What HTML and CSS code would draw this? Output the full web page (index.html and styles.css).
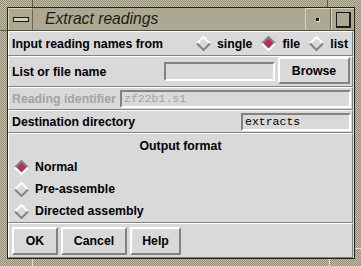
FILE: index.html
```html
<html lang="en">
<head>
  <meta charset="UTF-8">
  <title>Extract readings</title>
  <link rel="stylesheet" href="styles.css">
</head>
<body>

<div class="frame">
  <span class="handle h-top-left"></span>
  <span class="handle h-left-top"></span>
  <span class="handle h-top-right"></span>
  <span class="handle h-bottom-left"></span>
  <span class="handle h-bottom-right"></span>
  <span class="handle h-right-bottom"></span>

  <div class="window">
    <div class="titlebar">
      <div class="tb-btn tb-menu"><span class="bar"></span></div>
      <div class="title">Extract readings</div>
      <div class="tb-btn tb-iconify"><span class="dot"></span></div>
      <div class="tb-btn tb-maximize"><span class="box"></span></div>
    </div>

    <div class="client">
      <div class="row row-source">
        <span class="label">Input reading names from</span>
        <div class="radios">
          <span class="radio">
            <svg width="15" height="15" viewBox="0 0 15 15"><polyline points="1,7.5 7.5,1 14,7.5" class="hi"/><polyline points="1,7.5 7.5,14 14,7.5" class="lo"/></svg>
            single
          </span>
          <span class="radio on">
            <svg width="15" height="15" viewBox="0 0 15 15"><polygon points="7.5,2 13,7.5 7.5,13 2,7.5" class="dot"/><polyline points="1,7.5 7.5,1 14,7.5" class="lo"/><polyline points="1,7.5 7.5,14 14,7.5" class="hi"/></svg>
            file
          </span>
          <span class="radio">
            <svg width="15" height="15" viewBox="0 0 15 15"><polyline points="1,7.5 7.5,1 14,7.5" class="hi"/><polyline points="1,7.5 7.5,14 14,7.5" class="lo"/></svg>
            list
          </span>
        </div>
      </div>

      <div class="row row-file">
        <span class="label">List or file name</span>
        <span class="entry entry-file"></span>
        <span class="button browse">Browse</span>
      </div>

      <div class="row row-ident disabled">
        <span class="label">Reading identifier</span>
        <span class="entry entry-ident">zf22b1.s1</span>
      </div>

      <div class="row row-dest">
        <span class="label">Destination directory</span>
        <span class="entry entry-dest">extracts</span>
      </div>

      <div class="group">
        <div class="group-title">Output format</div>
        <span class="radio on">
          <svg width="15" height="15" viewBox="0 0 15 15"><polygon points="7.5,2 13,7.5 7.5,13 2,7.5" class="dot"/><polyline points="1,7.5 7.5,1 14,7.5" class="lo"/><polyline points="1,7.5 7.5,14 14,7.5" class="hi"/></svg>
          Normal
        </span>
        <span class="radio">
          <svg width="15" height="15" viewBox="0 0 15 15"><polyline points="1,7.5 7.5,1 14,7.5" class="hi"/><polyline points="1,7.5 7.5,14 14,7.5" class="lo"/></svg>
          Pre-assemble
        </span>
        <span class="radio">
          <svg width="15" height="15" viewBox="0 0 15 15"><polyline points="1,7.5 7.5,1 14,7.5" class="hi"/><polyline points="1,7.5 7.5,14 14,7.5" class="lo"/></svg>
          Directed assembly
        </span>
      </div>

      <div class="row row-buttons">
        <span class="button btn-ok">OK</span>
        <span class="button btn-cancel">Cancel</span>
        <span class="button btn-help">Help</span>
      </div>
    </div>
  </div>
</div>

</body>
</html>
```

FILE: styles.css
```css
body {
  margin: 0;
  font-family: "Liberation Sans", Arial, sans-serif;
  font-size: 12.3px;
  font-weight: bold;
  color: #000;
}

.frame {
  position: relative;
  width: 361px;
  height: 266px;
  box-sizing: border-box;
  padding: 7px 6px 7px 7px;
  background: repeating-conic-gradient(#c6c2a9 0 25%, #8f8b73 0 50%) 0 0 / 2px 2px;
}

.handle {
  position: absolute;
  background: #5c5946;
}

.h-top-left { left: 32px; top: 0; width: 1px; height: 7px; }
.h-left-top { left: 0; top: 30px; width: 7px; height: 1px; }
.h-top-right { left: 327px; top: 0; width: 1px; height: 7px; }
.h-bottom-left { left: 32px; bottom: 0; width: 1px; height: 7px; background: #e4e0cc; }
.h-bottom-right { left: 329px; bottom: 0; width: 1px; height: 7px; background: #e4e0cc; }
.h-right-bottom { right: 0; top: 248px; width: 6px; height: 1px; background: #e4e0cc; }

.window {
  height: 100%;
  box-sizing: border-box;
  border: 1px solid #26251d;
  background: #d9d9d9;
  display: flex;
  flex-direction: column;
}

/* title bar */
.titlebar {
  height: 22px;
  flex: none;
  display: flex;
  background: #aca891;
  border-bottom: 1px solid #55523f;
}

.tb-btn {
  flex: none;
  display: flex;
  align-items: center;
  justify-content: center;
  box-sizing: border-box;
  border-left: 1px solid #d8d4bc;
  border-top: 1px solid #d8d4bc;
  border-right: 1px solid #6a6753;
}

.tb-menu { width: 25px; }
.tb-iconify { width: 26px; margin-left: auto; }
.tb-maximize { width: 23px; border-right: none; }

.bar {
  width: 14px;
  height: 3px;
  border: 1px solid #1b1a14;
  background: #d4d0b8;
}

.dot {
  width: 3px;
  height: 3px;
  background: #1b1a14;
  border-right: 1px solid #e0dcc4;
  border-bottom: 1px solid #e0dcc4;
}

.box {
  width: 12px;
  height: 13px;
  border: 1px solid #1b1a14;
  border-right-width: 2px;
  border-bottom-width: 2px;
  background: #aca891;
}

.title {
  padding-left: 12px;
  font-size: 15.7px;
  font-weight: normal;
  font-style: italic;
  line-height: 22px;
  color: #1e1d16;
}

/* client area */
.client {
  flex: 1;
  display: flex;
  flex-direction: column;
}

.row, .group {
  box-sizing: border-box;
  border-top: 1px solid #fff;
  border-left: 1px solid #fff;
  border-bottom: 1px solid #828282;
  border-right: 1px solid #828282;
  margin-right: 1px;
}

.row {
  display: flex;
  align-items: center;
  padding: 0 1px 0 3px;
}

.row-source { height: 25px; }
.row-file { height: 31px; padding-right: 2px; }
.row-ident { height: 23px; }
.row-dest { height: 23px; }

.radios {
  display: flex;
  margin-left: auto;
  gap: 9px;
  padding-right: 3px;
}

.radio {
  display: flex;
  align-items: center;
  gap: 6px;
  line-height: 22px;
}

.radio svg { flex: none; }
.radio .hi { fill: none; stroke: #fff; stroke-width: 2; }
.radio .lo { fill: none; stroke: #828282; stroke-width: 2; }
.radio .dot { fill: #b03060; }

.entry {
  box-sizing: border-box;
  border-top: 2px solid #828282;
  border-left: 2px solid #828282;
  border-bottom: 2px solid #fff;
  border-right: 2px solid #fff;
  font-family: "Liberation Mono", "Courier New", monospace;
  font-weight: normal;
  font-size: 11.5px;
  line-height: 14px;
  padding-left: 2px;
}

.entry-file { width: 111px; height: 19px; margin-left: auto; }
.entry-ident { width: 231px; height: 18px; margin-left: auto; color: #a3a3a3; }
.entry-dest { width: 110px; height: 18px; margin-left: auto; }

.disabled .label { color: #a3a3a3; }

.button {
  box-sizing: border-box;
  display: flex;
  align-items: center;
  justify-content: center;
  border-top: 2px solid #fff;
  border-left: 2px solid #fff;
  border-bottom: 2px solid #828282;
  border-right: 2px solid #828282;
}

.browse { width: 72px; height: 27px; margin-left: 3px; align-self: flex-start; }

/* output format group */
.group {
  height: 90px;
  display: flex;
  flex-direction: column;
  padding: 5px 0 0 5px;
}

.group-title {
  text-align: center;
  line-height: 14px;
  margin-bottom: 3px;
  padding-right: 5px;
}

/* dialog buttons */
.row-buttons {
  flex: 1;
  align-items: flex-start;
  padding-top: 3px;
  gap: 3px;
}

.row-buttons .button { height: 28px; }
.btn-ok { width: 46px; }
.btn-cancel { width: 66px; }
.btn-help { width: 51px; }
```
